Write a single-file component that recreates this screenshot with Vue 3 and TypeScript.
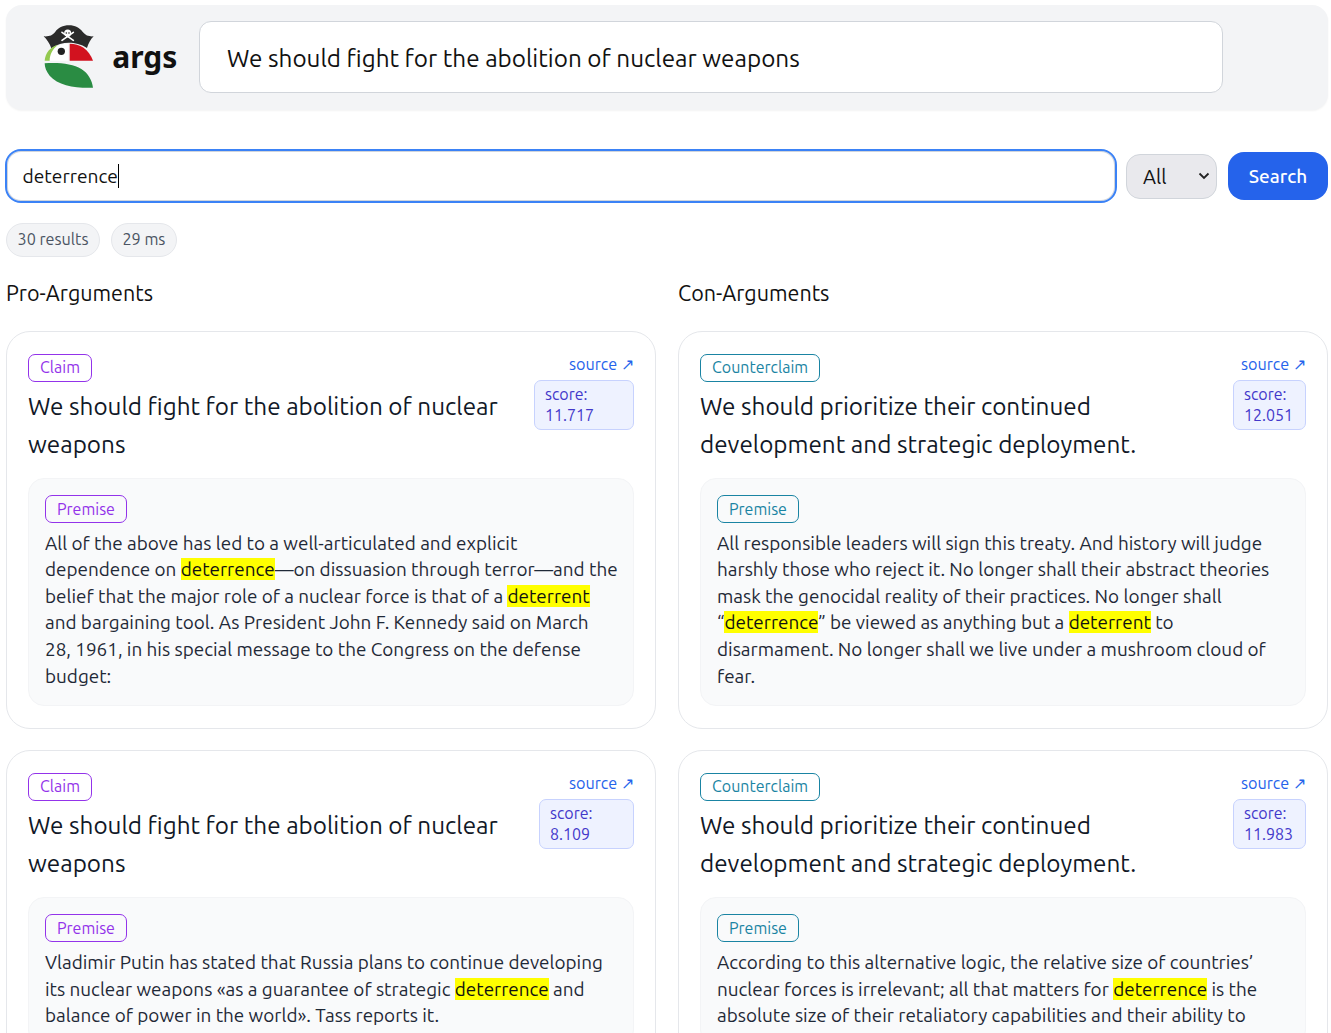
<script setup lang="ts">
interface Seg { t: string; h?: boolean }
interface Arg { kind: string; title: string[]; score: string; scoreWidth: number; lines: Seg[][] }
const pro: Arg[] = [
  { kind: 'Claim', score: '11.717', scoreWidth: 100, title: ['We should fight for the abolition of nuclear', 'weapons'], lines: [
    [{ t: 'All of the above has led to a well-articulated and explicit' }],
    [{ t: 'dependence on ' }, { t: 'deterrence', h: true }, { t: '—on dissuasion through terror—and the' }],
    [{ t: 'belief that the major role of a nuclear force is that of a ' }, { t: 'deterrent', h: true }],
    [{ t: 'and bargaining tool. As President John F. Kennedy said on March' }],
    [{ t: '28, 1961, in his special message to the Congress on the defense' }],
    [{ t: 'budget:' }],
  ] },
  { kind: 'Claim', score: '8.109', scoreWidth: 95, title: ['We should fight for the abolition of nuclear', 'weapons'], lines: [
    [{ t: 'Vladimir Putin has stated that Russia plans to continue developing' }],
    [{ t: 'its nuclear weapons «as a guarantee of strategic ' }, { t: 'deterrence', h: true }, { t: ' and' }],
    [{ t: 'balance of power in the world». Tass reports it.' }],
  ] },
]
const con: Arg[] = [
  { kind: 'Counterclaim', score: '12.051', scoreWidth: 73, title: ['We should prioritize their continued', 'development and strategic deployment.'], lines: [
    [{ t: 'All responsible leaders will sign this treaty. And history will judge' }],
    [{ t: 'harshly those who reject it. No longer shall their abstract theories' }],
    [{ t: 'mask the genocidal reality of their practices. No longer shall' }],
    [{ t: '“' }, { t: 'deterrence', h: true }, { t: '” be viewed as anything but a ' }, { t: 'deterrent', h: true }, { t: ' to' }],
    [{ t: 'disarmament. No longer shall we live under a mushroom cloud of' }],
    [{ t: 'fear.' }],
  ] },
  { kind: 'Counterclaim', score: '11.983', scoreWidth: 73, title: ['We should prioritize their continued', 'development and strategic deployment.'], lines: [
    [{ t: 'According to this alternative logic, the relative size of countries’' }],
    [{ t: 'nuclear forces is irrelevant; all that matters for ' }, { t: 'deterrence', h: true }, { t: ' is the' }],
    [{ t: 'absolute size of their retaliatory capabilities and their ability to' }],
  ] },
]
const columns = [
  { name: 'Pro-Arguments', tone: 'pro', items: pro },
  { name: 'Con-Arguments', tone: 'con', items: con },
]
</script>

<template>
  <div class="page">
    <header class="top">
      <div class="brand">
        <svg class="logo" viewBox="40 28 155 190" aria-hidden="true">
          <path d="M42 62 C58 63 68 60 76 50 C85 36 100 29 118 29 C136 29 150 36 160 50 C168 60 178 63 192 62 C182 72 176 84 172 97 C155 85 135 81 118 81 C100 81 82 86 65 98 C60 84 52 72 42 62Z" fill="#2b2b2b"/>
          <path d="M97 50 L131 74 M131 50 L97 74" stroke="#fff" stroke-width="5" stroke-linecap="round"/>
          <circle cx="114" cy="52" r="10.500" fill="#fff"/>
          <rect x="109" y="58" width="10" height="7" fill="#fff"/>
          <circle cx="110" cy="52" r="2.500" fill="#2b2b2b"/>
          <circle cx="118" cy="52" r="2.500" fill="#2b2b2b"/>
          <path d="M120 84 C150 84 178 100 190 135 L120 135Z" fill="#d2121f"/>
          <path d="M116 84 C85 84 48 105 45 135 L116 135Z" fill="#fff"/>
          <path d="M85 87 C62 93 47 112 45 135 L60 135 C60 118 68 100 85 87Z" fill="#93c94f"/>
          <circle cx="95" cy="107" r="11" fill="#222"/>
          <path d="M45 143 C90 140 130 145 155 160 C175 172 188 195 190 216 C140 218 85 210 60 180 C50 168 45 155 45 143Z" fill="#2a8c43"/>
        </svg>
        <span class="wordmark">args</span>
      </div>
      <div class="topic">We should fight for the abolition of nuclear weapons</div>
    </header>

    <div class="searchrow">
      <div class="searchbox">deterrence<span class="caret"></span></div>
      <div class="select"><span>All</span>
        <svg width="12" height="8" viewBox="0 0 12 8" aria-hidden="true"><path d="M1.500 1.500 L6 6 L10.500 1.500" fill="none" stroke="#222" stroke-width="1.800"/></svg>
      </div>
      <button class="go" type="button">Search</button>
    </div>

    <div class="stats"><span class="pill">30 results</span><span class="pill">29 ms</span></div>

    <main class="cols">
      <section v-for="c in columns" :key="c.name" class="col">
        <h2>{{ c.name }}</h2>
        <article v-for="(a, i) in c.items" :key="i" class="card" :class="c.tone">
          <div class="head">
            <div class="claim">
              <span class="tag">{{ a.kind }}</span>
              <h3><span v-for="(l, j) in a.title" :key="j" class="line">{{ l }}</span></h3>
            </div>
            <div class="meta">
              <a class="source">source ↗</a>
              <div class="score" :style="{ width: a.scoreWidth + 'px' }">score:<br>{{ a.score }}</div>
            </div>
          </div>
          <div class="premise">
            <span class="tag ptag">Premise</span>
            <p><span v-for="(l, j) in a.lines" :key="j" class="line"><template v-for="(s, k) in l" :key="k"><mark v-if="s.h">{{ s.t }}</mark><template v-else>{{ s.t }}</template></template></span></p>
          </div>
        </article>
      </section>
    </main>
  </div>
</template>

<style>
html, body { margin: 0; height: 1033px; overflow: hidden; background: #fff; }
</style>
<style scoped>
.page { box-sizing: border-box; width: 1331px; height: 1033px; overflow: hidden; padding: 5px 3px 0 6px; font-family: Ubuntu, "Noto Sans", sans-serif; color: #111; }
.top { display: flex; align-items: center; height: 105px; box-sizing: border-box; background: #f3f4f6; border-radius: 16px; box-shadow: 0 1px 2px rgba(0,0,0,.05); padding: 16px 105px 17px 37px; }
.brand { display: flex; align-items: center; width: 156px; flex: none; }
.logo { flex: none; width: 51.670px; height: 63.330px; margin-top: -1px; }
.wordmark { font-family: "Noto Sans", sans-serif; font-weight: 700; font-size: 30px; margin-left: 17.500px; }
.topic { flex: 1; height: 72px; box-sizing: border-box; display: flex; align-items: center; padding: 1px 0 0 27px; background: #fff; border: 1px solid #d1d5db; border-radius: 12px; font-size: 24.270px; }
.searchrow { display: flex; align-items: center; margin: 39px 0 0 -1px; height: 54px; }
.searchbox { width: 1112px; height: 54px; box-sizing: border-box; border: 2.500px solid #3b82f6; border-radius: 16px; display: flex; align-items: center; padding-left: 15.500px; font-size: 19.200px; box-shadow: inset 0 0 0 1px #d1d5db; flex: none; }
.caret { width: 1.500px; height: 24px; background: #000; margin-left: 0; }
.select { width: 91px; height: 45px; box-sizing: border-box; margin-left: 9px; border: 1px solid #d1d5db; border-radius: 14px; background: #e9e9ed; display: flex; align-items: center; justify-content: space-between; padding: 0 6px 0 16px; font-size: 20px; flex: none; }
.go { width: 100px; height: 48px; margin-left: 11px; border: 0; border-radius: 16px; background: #2563eb; color: #fff; font: 500 19px Ubuntu, "Noto Sans", sans-serif; flex: none; padding: 0; }
.stats { display: flex; gap: 11px; margin-top: 20px; }
.pill { height: 34px; box-sizing: border-box; display: flex; align-items: center; padding: 0 10.500px 2px; border: 1px solid #e5e7eb; border-radius: 17px; background: #f3f4f6; color: #4b5563; font-size: 16.200px; }
.cols { display: grid; grid-template-columns: 650px 650px; gap: 22px; margin-top: 20px; }
h2 { margin: 0 0 22px; height: 32px; line-height: 32px; font-size: 21.500px; font-weight: 400; }
.card { box-sizing: border-box; border: 1px solid #e5e7eb; border-radius: 24px; padding: 22px 21px; margin-bottom: 21px; background: #fff; }
.head { display: flex; justify-content: space-between; align-items: flex-start; }
.tag { display: block; width: fit-content; box-sizing: border-box; height: 28px; line-height: 25px; padding: 0 11px; border: 1px solid; border-radius: 7px; font-size: 16px; }
.ptag { line-height: 27px; }
.pro .tag { color: #9333ea; border-color: #9333ea; }
.con .tag { color: #1a84a3; border-color: #1a84a3; }
.claim { min-width: 0; }
h3 { margin: 5px 0 0; font-size: 24.270px; line-height: 38.200px; font-weight: 400; color: #111827; }
.line { display: block; white-space: nowrap; }
.meta { display: flex; flex-direction: column; align-items: flex-end; }
.source { color: #2563eb; font-size: 16.200px; line-height: 20px; }
.score { box-sizing: border-box; margin-top: 6px; padding: 3px 10px; border: 1px solid #c7d2fe; border-radius: 7px; background: #eef2ff; color: #4338ca; font-size: 16px; line-height: 21px; }
.premise { margin-top: 14.400px; padding: 16px; background: #f9fafb; border: 1px solid #f3f4f6; border-radius: 16px; }
p { margin: 6.900px 0 0; font-size: 18.900px; line-height: 26.600px; color: #1f2937; }
mark { background: #ffff00; color: #111; }
</style>
